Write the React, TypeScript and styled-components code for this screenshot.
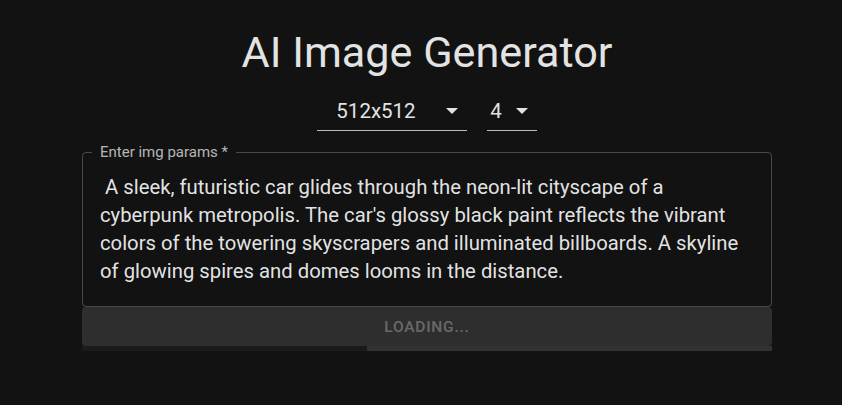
import React from "react";
import styled, { createGlobalStyle } from "styled-components";

const Global = createGlobalStyle`
  html, body { margin: 0; padding: 0; background: #121212; }
  body { font-family: Roboto, "Liberation Sans", Arial, sans-serif; color: rgba(255,255,255,0.87); }
  * { box-sizing: border-box; }
`;

const Page = styled.main`
  display: flex;
  flex-direction: column;
  align-items: center;
  padding: 28px 0 0 12px;
  min-height: 405px;
`;

const Title = styled.h1`
  margin: 0;
  font-size: 43.2px;
  line-height: 50px;
  font-weight: 400;
  color: #e3e3e3;
`;

const SelectRow = styled.div`
  display: flex;
  gap: 20px;
  margin-top: 19px;
`;

const Select = styled.div<{ $w: number }>`
  width: ${(p) => p.$w}px;
  display: flex;
  align-items: center;
  padding-bottom: 5px;
  border-bottom: 1px solid rgba(255, 255, 255, 0.72);
  cursor: pointer;
`;

const SelectValue = styled.span`
  flex: 1;
  text-align: center;
  font-size: 20.5px;
  line-height: 28px;
  color: #e3e3e3;
`;

const SelectIcon = styled.span`
  width: 32px;
  display: flex;
  align-items: center;
  padding-left: 11px;
  color: #e3e3e3;
`;

const Field = styled.fieldset`
  width: 690px;
  margin: 14px 0 0;
  padding: 0;
  min-width: 0;
  border: 1px solid rgba(255, 255, 255, 0.23);
  border-radius: 4px;
`;

const Legend = styled.legend`
  margin-left: 9px;
  padding: 0 8px;
  font-size: 15px;
  line-height: 14px;
  color: rgba(255, 255, 255, 0.7);
`;

const Prompt = styled.textarea`
  display: block;
  width: 100%;
  height: 147px;
  padding: 14px 17px 21px;
  border: none;
  outline: none;
  resize: none;
  overflow: hidden;
  background: transparent;
  font-family: Roboto, "Liberation Sans", Arial, sans-serif;
  font-size: 20.3px;
  line-height: 28px;
  color: rgba(255, 255, 255, 0.9);
`;

const Button = styled.button`
  width: 690px;
  height: 39px;
  margin: 0;
  border: none;
  border-radius: 4px;
  background: #2e2e2e;
  color: rgba(255, 255, 255, 0.3);
  font-family: Roboto, "Liberation Sans", Arial, sans-serif;
  font-size: 15.5px;
  font-weight: 500;
  letter-spacing: 0.05em;
  text-transform: uppercase;
`;

const Track = styled.div`
  width: 690px;
  height: 5px;
  background: #1b1b1b;
  display: flex;
`;

const Bar = styled.div`
  height: 100%;
  background: #323232;
`;

const Caret = () => (
  <svg width="12" height="6" viewBox="0 0 12 6">
    <path d="M0 0h12L6 6z" fill="currentColor" />
  </svg>
);

const text =
  " A sleek, futuristic car glides through the neon-lit cityscape of a cyberpunk metropolis. The car's glossy black paint reflects the vibrant colors of the towering skyscrapers and illuminated billboards. A skyline of glowing spires and domes looms in the distance.";

export default function App() {
  const progress = 41.3;
  return (
    <>
      <Global />
      <Page>
        <Title>AI Image Generator</Title>
        <SelectRow>
          <Select $w={150}>
            <SelectValue>512x512</SelectValue>
            <SelectIcon><Caret /></SelectIcon>
          </Select>
          <Select $w={50}>
            <SelectValue>4</SelectValue>
            <SelectIcon><Caret /></SelectIcon>
          </Select>
        </SelectRow>
        <Field>
          <Legend>Enter img params *</Legend>
          <Prompt readOnly defaultValue={text} />
        </Field>
        <Button disabled>Loading...</Button>
        <Track>
          <Bar style={{ marginLeft: `${progress}%`, flex: 1 }} />
        </Track>
      </Page>
    </>
  );
}
